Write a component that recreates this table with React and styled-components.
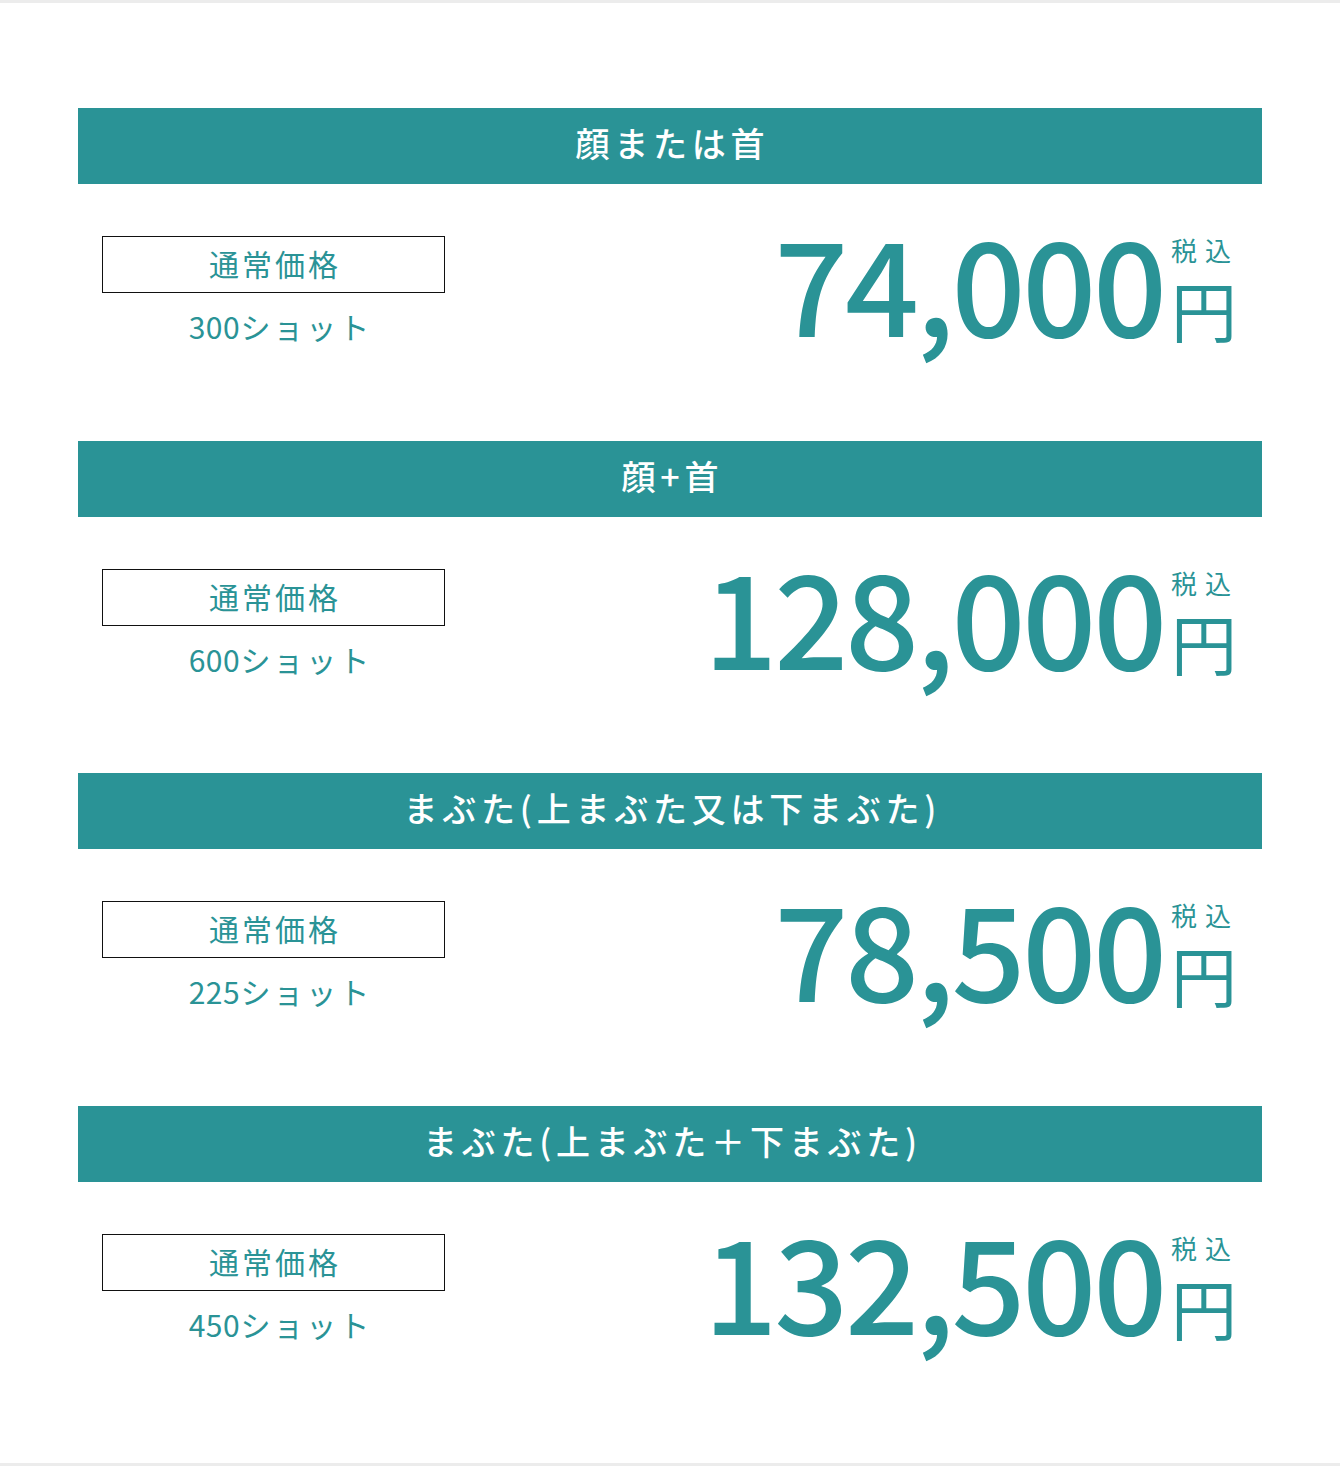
import React from 'react';
import styled, { createGlobalStyle } from 'styled-components';

const GlobalStyle = createGlobalStyle`
  html, body {
    margin: 0;
    padding: 0;
    background: #fff;
  }
  body {
    font-family: 'Noto Sans CJK JP', 'Noto Sans', sans-serif;
  }
`;

const TEAL = '#2a9396';

const Page = styled.div`
  border-top: 3px solid #ececec;
  border-bottom: 3px solid #ececec;
  padding: 105px 78px 24.33px;
  box-sizing: border-box;
  height: 1466px;
`;

const Section = styled.section`
  height: 332.67px;
`;

// 見出しバー
const Bar = styled.h2`
  margin: 0;
  height: 76px;
  box-sizing: border-box;
  padding-bottom: 6px;
  background: ${TEAL};
  color: #fff;
  font-size: 34px;
  font-weight: 500;
  letter-spacing: 0.14em;
  line-height: 70px;
  text-align: center;
  text-indent: 0.14em;
`;

const Row = styled.div`
  display: flex;
  justify-content: space-between;
  align-items: flex-start;
  padding: 31px 23px 0 24px;
`;

const Plan = styled.div`
  margin-top: 21px;
  width: 343px;
  display: flex;
  flex-direction: column;
  align-items: center;
`;

const Label = styled.div`
  width: 100%;
  box-sizing: border-box;
  height: 57px;
  border: 1px solid #111;
  color: ${TEAL};
  font-size: 30px;
  letter-spacing: 0.1em;
  text-indent: 0.1em;
  line-height: 52px;
  text-align: center;
`;

const Shots = styled.div`
  margin-top: 18px;
  color: ${TEAL};
  font-size: 30px;
  line-height: 1;
  letter-spacing: 0.1em;
  padding-left: 14px;
`;

const Count = styled.span`
  letter-spacing: 0.02em;
`;

const Price = styled.div`
  color: ${TEAL};
  white-space: nowrap;
  line-height: 1;
`;

const Amount = styled.span`
  font-size: 130px;
  font-weight: 500;
  letter-spacing: -0.025em;
  line-height: 1;
`;

const Unit = styled.span`
  display: inline-block;
  vertical-align: baseline;
  margin-left: 7px;
`;

const Tax = styled.span`
  display: block;
  font-size: 26px;
  line-height: 1;
  letter-spacing: 8px;
  margin-bottom: 12px;
`;

const Yen = styled.span`
  display: block;
  font-size: 66px;
  line-height: 1;
`;

const plans = [
  { title: '顔または首', shots: '300', price: '74,000' },
  { title: '顔+首', shots: '600', price: '128,000' },
  { title: 'まぶた(上まぶた又は下まぶた)', shots: '225', price: '78,500' },
  { title: 'まぶた(上まぶた＋下まぶた)', shots: '450', price: '132,500' },
];

function App() {
  return (
    <>
      <GlobalStyle />
      <Page>
        {plans.map((p) => (
          <Section key={p.title}>
            <Bar>{p.title}</Bar>
            <Row>
              <Plan>
                <Label>通常価格</Label>
                <Shots>
                  <Count>{p.shots}</Count>ショット
                </Shots>
              </Plan>
              <Price>
                <Amount>{p.price}</Amount>
                <Unit>
                  <Tax>税込</Tax>
                  <Yen>円</Yen>
                </Unit>
              </Price>
            </Row>
          </Section>
        ))}
      </Page>
    </>
  );
}

export default App;
